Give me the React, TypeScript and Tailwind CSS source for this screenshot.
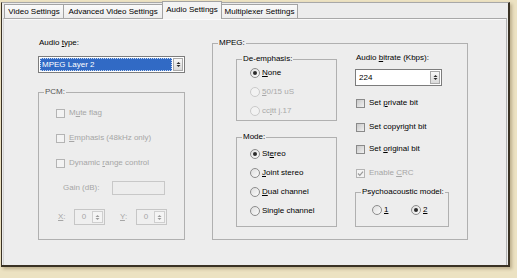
import React from "react";

const U = ({ c }: { c: string }) => <span className="underline decoration-1 underline-offset-[1px]">{c}</span>;

function Arrows({ disabled }: { disabled?: boolean }) {
  const f = disabled ? "#9a9a9a" : "#2a2a2a";
  return (
    <svg width="5" height="7" viewBox="0 0 5 7">
      <polygon points="0.5,3 2.5,1 4.5,3" fill={f} />
      <polygon points="0.5,4 2.5,6 4.5,4" fill={f} />
    </svg>
  );
}

function Check({ checked, disabled }: { checked?: boolean; disabled?: boolean }) {
  return (
    <span
      className={`flex h-[9px] w-[9px] shrink-0 items-center justify-center border ${
        disabled ? "border-[#b4b4b4] bg-[#f3f3f3]" : "border-[#8a8a8a] bg-gradient-to-br from-[#c9c9c9] to-[#f1f1f1]"
      }`}
    >
      {checked && (
        <svg width="7" height="7" viewBox="0 0 7 7">
          <path d="M1 3.5 L2.8 5.3 L6 1.6" stroke={disabled ? "#9a9a9a" : "#222"} strokeWidth="1.2" fill="none" />
        </svg>
      )}
    </span>
  );
}

function Radio({ checked, disabled }: { checked?: boolean; disabled?: boolean }) {
  return (
    <span
      className={`flex h-[10px] w-[10px] shrink-0 items-center justify-center rounded-full border ${
        disabled ? "border-[#cacaca] bg-[#f2f2f2]" : "border-[#8c8c8c] bg-gradient-to-br from-[#dedede] to-[#fbfbfb]"
      }`}
    >
      {checked && <span className="h-[4px] w-[4px] rounded-full bg-[#2a2a2a]" />}
    </span>
  );
}

function CheckRow({ children, checked, disabled, cls }: { children: React.ReactNode; checked?: boolean; disabled?: boolean; cls: string }) {
  return (
    <div className={`flex h-[10px] items-center gap-[4px] ${cls} ${disabled ? "text-[#a6a6a6]" : "text-black"}`}>
      <Check checked={checked} disabled={disabled} />
      <span>{children}</span>
    </div>
  );
}

function RadioRow({ children, checked, disabled }: { children: React.ReactNode; checked?: boolean; disabled?: boolean }) {
  return (
    <div className={`flex h-[19px] items-center gap-[2px] pl-[13px] ${disabled ? "text-[#a9a9a9]" : "text-black"}`}>
      <Radio checked={checked} disabled={disabled} />
      <span>{children}</span>
    </div>
  );
}

function Spin() {
  return (
    <div className="flex h-[16px] w-[31px] border border-[#c6c6c6] bg-[#efefef] p-[1px]">
      <div className="flex flex-1 items-center justify-center text-[#a6a6a6]">0</div>
      <div className="flex w-[11px] items-center justify-center border border-[#cfcfcf] bg-[#f4f4f4]">
        <Arrows disabled />
      </div>
    </div>
  );
}

export default function App() {
  return (
    <div className="h-[278px] w-[517px] overflow-hidden bg-[#ece2c2] pl-[1px] pt-[2px] text-[8px] leading-[10px] font-['Liberation_Sans',Arial,sans-serif]">
      <div className="flex h-[265px] w-[509px] flex-col border-b-2 border-l border-r-2 border-t border-b-[#3a3224] border-l-[#3a3224] border-r-[#3a3224] border-t-[#a8a8a8] bg-[#ececec] shadow-[2px_2px_3px_rgba(80,60,20,0.3)]">
        {/* tab strip */}
        <div className="flex h-[15px] items-end pl-[2px]">
          <div className="flex h-[14px] w-[59px] items-center justify-center border-l border-t border-[#a3a3a3] bg-gradient-to-b from-[#fafafa] to-[#ececec] pt-[1px] text-black">
            Video Settings
          </div>
          <div className="flex h-[14px] w-[99px] items-center justify-center border-l border-t border-[#a3a3a3] bg-gradient-to-b from-[#fafafa] to-[#ececec] pt-[1px] text-black">
            Advanced Video Settings
          </div>
          <div className="relative z-10 -mb-[1px] flex h-[18px] w-[60px] items-center justify-center border-l border-r border-t border-[#a3a3a3] bg-[#f3f3f3] pb-[2px] text-black">
            Audio Settings
          </div>
          <div className="flex h-[14px] w-[76px] items-center justify-center border-r border-t border-[#a3a3a3] bg-gradient-to-b from-[#fafafa] to-[#ececec] pt-[1px] text-black">
            Multiplexer Settings
          </div>
        </div>
        {/* tab page */}
        <div className="mx-[1px] flex flex-1 border-l border-r border-t border-l-[#d4d4d4] border-r-[#b4b4b4] border-t-[#a8a8a8] bg-[#ededed] pl-[34px] shadow-[inset_0_1px_0_#fafafa]">
          {/* left column */}
          <div className="flex w-[147px] flex-col pt-[19px]">
            <div className="h-[10px] pl-[1px] text-black">
              Audio <U c="t" />ype:
            </div>
            <div className="mt-[8px] flex h-[17px] w-[147px] border border-[#7c7c7c] bg-white p-[1px]">
              <div className="flex flex-1 items-center bg-[#316ac5] pl-[2px] text-white outline-1 outline-dotted -outline-offset-1 outline-[#c9d8f0]">
                MPEG Layer 2
              </div>
              <div className="ml-[1px] flex w-[10px] items-center justify-center border border-[#a9a9a9] bg-gradient-to-b from-[#f8f8f8] to-[#dadada]">
                <Arrows />
              </div>
            </div>
            <fieldset className="mt-[14px] h-[153px] w-[147px] border border-[#b0b0b0]">
              <legend className="ml-[5px] h-[10px] px-[1px] text-[#555]">PCM:</legend>
              <div className="flex flex-col pl-[17px]">
                <CheckRow disabled cls="mt-[11px]">
                  M<U c="u" />te flag
                </CheckRow>
                <CheckRow disabled cls="mt-[15px]">
                  <U c="E" />mphasis (48kHz only)
                </CheckRow>
                <CheckRow disabled cls="mt-[15px]">
                  Dynamic <U c="r" />ange control
                </CheckRow>
                <div className="mt-[13px] flex h-[14px] items-center pl-[7px] text-[#a6a6a6]">
                  <span className="w-[49px]">Gain (dB):</span>
                  <span className="h-[14px] w-[53px] border border-[#c8c8c8] bg-[#ededed]" />
                </div>
                <div className="mt-[14px] flex h-[16px] items-center pl-[2px] text-[#a6a6a6]">
                  <span className="w-[16px]">
                    <U c="X" />:
                  </span>
                  <Spin />
                  <span className="ml-[15px] w-[16px]">
                    <U c="Y" />:
                  </span>
                  <Spin />
                </div>
              </div>
            </fieldset>
          </div>

          {/* MPEG */}
          <fieldset className="ml-[27px] mt-[19px] h-[202px] w-[256px] border border-[#b0b0b0]">
            <legend className="ml-[5px] h-[10px] px-[1px] text-black">MPEG:</legend>
            <div className="flex pl-[23px]">
              <div className="flex w-[101px] flex-col">
                <fieldset className="mt-[6px] h-[67px] w-[101px] border border-[#b0b0b0]">
                  <legend className="ml-[5px] h-[10px] px-[1px] text-black">De-emphasis:</legend>
                  <div className="-mt-[1px] flex flex-col">
                    <RadioRow checked>
                      <U c="N" />one
                    </RadioRow>
                    <RadioRow disabled>
                      <U c="5" />0/15 uS
                    </RadioRow>
                    <RadioRow disabled>
                      cc<U c="i" />tt j.17
                    </RadioRow>
                  </div>
                </fieldset>
                <fieldset className="mt-[11px] h-[95px] w-[101px] border border-[#b0b0b0]">
                  <legend className="ml-[5px] h-[10px] px-[1px] text-black">Mode:</legend>
                  <div className="mt-[2px] flex flex-col">
                    <RadioRow checked>
                      St<U c="e" />reo
                    </RadioRow>
                    <RadioRow>
                      <U c="J" />oint stereo
                    </RadioRow>
                    <RadioRow>
                      <U c="D" />ual channel
                    </RadioRow>
                    <RadioRow>Single channel</RadioRow>
                  </div>
                </fieldset>
              </div>

              <div className="ml-[18px] flex w-[94px] flex-col">
                <div className="mt-[5px] h-[10px] pl-[1px] text-black">
                  Audio <U c="b" />itrate (Kbps):
                </div>
                <div className="mt-[6px] flex h-[17px] w-[87px] border border-[#7c7c7c] bg-white p-[1px]">
                  <div className="flex flex-1 items-center pl-[2px] text-black">224</div>
                  <div className="ml-[1px] flex w-[10px] items-center justify-center border border-[#a9a9a9] bg-gradient-to-b from-[#f8f8f8] to-[#dadada]">
                    <Arrows />
                  </div>
                </div>
                <CheckRow cls="mt-[12px] pl-[1px] gap-[3px]">
                  Set <U c="p" />rivate bit
                </CheckRow>
                <CheckRow cls="mt-[14px] pl-[1px] gap-[3px]">
                  Set copyri<U c="g" />ht bit
                </CheckRow>
                <CheckRow cls="mt-[12px] pl-[1px] gap-[3px]">
                  Set <U c="o" />riginal bit
                </CheckRow>
                <CheckRow checked disabled cls="mt-[14px] pl-[1px] gap-[3px]">
                  Enable <U c="C" />RC
                </CheckRow>
                <fieldset className="mt-[9px] h-[40px] w-[94px] border border-[#b0b0b0]">
                  <legend className="ml-[5px] h-[10px] px-[1px] text-black">Psychoacoustic model:</legend>
                  <div className="mt-[8px] flex h-[10px] items-center pl-[16px] text-black">
                    <div className="flex w-[39px] items-center gap-[2px]">
                      <Radio />
                      <U c="1" />
                    </div>
                    <div className="flex items-center gap-[2px]">
                      <Radio checked />
                      <U c="2" />
                    </div>
                  </div>
                </fieldset>
              </div>
            </div>
          </fieldset>
        </div>
      </div>
    </div>
  );
}
